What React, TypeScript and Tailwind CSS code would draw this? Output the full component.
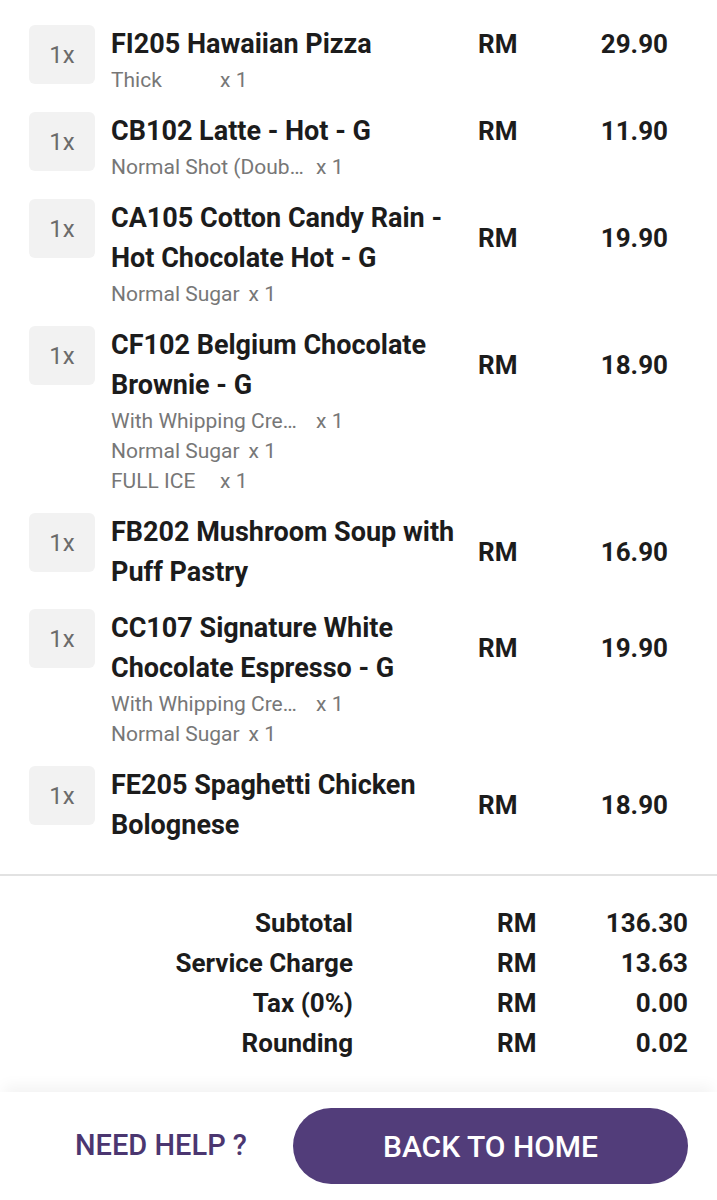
import React from "react";

type Option = { name: string; qty: number };
type Item = { qty: number; title: string; price: string; options: Option[] };

const items: Item[] = [
  { qty: 1, title: "FI205 Hawaiian Pizza", price: "29.90", options: [{ name: "Thick", qty: 1 }] },
  { qty: 1, title: "CB102 Latte - Hot - G", price: "11.90", options: [{ name: "Normal Shot (Double Shot)", qty: 1 }] },
  {
    qty: 1,
    title: "CA105 Cotton Candy Rain - Hot Chocolate Hot - G",
    price: "19.90",
    options: [{ name: "Normal Sugar", qty: 1 }],
  },
  {
    qty: 1,
    title: "CF102 Belgium Chocolate Brownie - G",
    price: "18.90",
    options: [
      { name: "With Whipping Cream", qty: 1 },
      { name: "Normal Sugar", qty: 1 },
      { name: "FULL ICE", qty: 1 },
    ],
  },
  { qty: 1, title: "FB202 Mushroom Soup with Puff Pastry", price: "16.90", options: [] },
  {
    qty: 1,
    title: "CC107 Signature White Chocolate Espresso - G",
    price: "19.90",
    options: [
      { name: "With Whipping Cream", qty: 1 },
      { name: "Normal Sugar", qty: 1 },
    ],
  },
  { qty: 1, title: "FE205 Spaghetti Chicken Bolognese", price: "18.90", options: [] },
];

const totals = [
  { label: "Subtotal", value: "136.30" },
  { label: "Service Charge", value: "13.63" },
  { label: "Tax (0%)", value: "0.00" },
  { label: "Rounding", value: "0.02" },
];

function OrderItem({ item }: { item: Item }) {
  return (
    <div className="flex gap-4">
      {/* Quantity badge */}
      <div className="w-[66px] h-[59px] mt-[1px] shrink-0 rounded-md bg-[#f2f2f2] flex items-center justify-center text-[24px] text-[#6b6b6b]">
        {item.qty}x
      </div>

      <div className="flex-1 flex flex-col">
        <div className="flex items-center">
          <div className="flex-1 pr-2 text-[27px] leading-[40px] font-bold text-[#1c1c1c]">{item.title}</div>
          <div className="w-[80px] text-[26px] font-bold text-[#1c1c1c]">RM</div>
          <div className="w-[110px] text-right text-[26px] font-bold text-[#1c1c1c]">{item.price}</div>
        </div>
        {item.options.length > 0 && (
          <div className="mt-[1px] flex flex-col">
            {item.options.map((opt, i) => (
              <div key={i} className="flex text-[21px] leading-[30px] text-[#777777]">
                <span className="min-w-[100px] max-w-[196px] truncate">{opt.name}</span>
                <span className="ml-[9px] whitespace-nowrap">x {opt.qty}</span>
              </div>
            ))}
          </div>
        )}
      </div>
    </div>
  );
}

export default function App() {
  return (
    <div className="w-full min-h-[1200px] bg-white flex flex-col" style={{ fontFamily: "Roboto, 'Noto Sans', sans-serif" }}>
      {/* Items */}
      <div className="flex flex-col gap-[16px] pt-[24px] pb-[29px] pl-[29px] pr-[49px]">
        {items.map((item, i) => (
          <OrderItem key={i} item={item} />
        ))}
      </div>

      <div className="h-[2px] bg-[#e2e2e2]" />

      {/* Totals */}
      <div className="flex flex-col pt-[27px] pb-[29px] pr-[29px]">
        {totals.map((t) => (
          <div key={t.label} className="flex text-[26px] leading-[40px] font-bold text-[#1c1c1c]">
            <div className="w-[353px] text-right">{t.label}</div>
            <div className="ml-[144px]">RM</div>
            <div className="flex-1 text-right">{t.value}</div>
          </div>
        ))}
      </div>

      {/* Footer */}
      <div className="h-[108px] flex items-center pr-[29px] pl-[29px] bg-white shadow-[0_-10px_14px_-4px_rgba(0,0,0,0.05)]">
        <div className="flex-1 text-center text-[29px] font-medium text-[#4b3670]">NEED HELP ?</div>
        <button className="w-[395px] h-[76px] rounded-full bg-[#523d7a] text-white text-[30px] font-medium">
          BACK TO HOME
        </button>
      </div>
    </div>
  );
}
